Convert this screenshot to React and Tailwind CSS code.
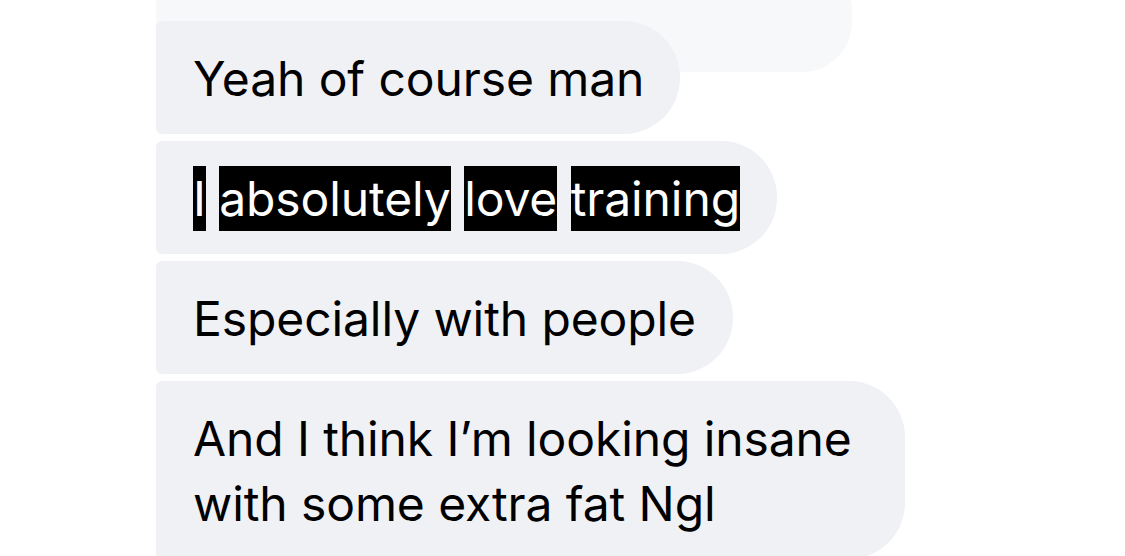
export default function App() {
  const hl = 'inline-block bg-black text-white';
  const bubble =
    'relative rounded-l-[6px] rounded-r-[56px] bg-[#f0f1f5] pt-[25px] pb-[23px] pl-[37px] text-[48px] leading-[65px] tracking-[-0.1px]';
  return (
    <div
      className="h-[556px] w-[1125px] overflow-hidden bg-white text-black"
      style={{ fontFamily: 'Inter, "Noto Sans", sans-serif' }}
    >
      <div className="flex flex-col items-start gap-[7px] pl-[156px]">
        {/* quoted message, faded behind the reply */}
        <div className="-mt-[40px] h-[112px] w-[696px] rounded-l-[6px] rounded-r-[50px] bg-[#f7f8fa]" />

        <div className={`${bubble} -mt-[58px] pr-[36px]`}>Yeah of course man</div>

        <div className={`${bubble} pr-[37px]`}>
          <span className={hl}>I</span> <span className={hl}>absolutely</span>{' '}
          <span className={hl}>love</span> <span className={hl}>training</span>
        </div>

        <div className={`${bubble} pr-[37px]`}>Especially with people</div>

        <div className={`${bubble} pr-[53px]`}>
          And I think I’m looking insane
          <br />
          with some extra fat Ngl
        </div>
      </div>
    </div>
  );
}
